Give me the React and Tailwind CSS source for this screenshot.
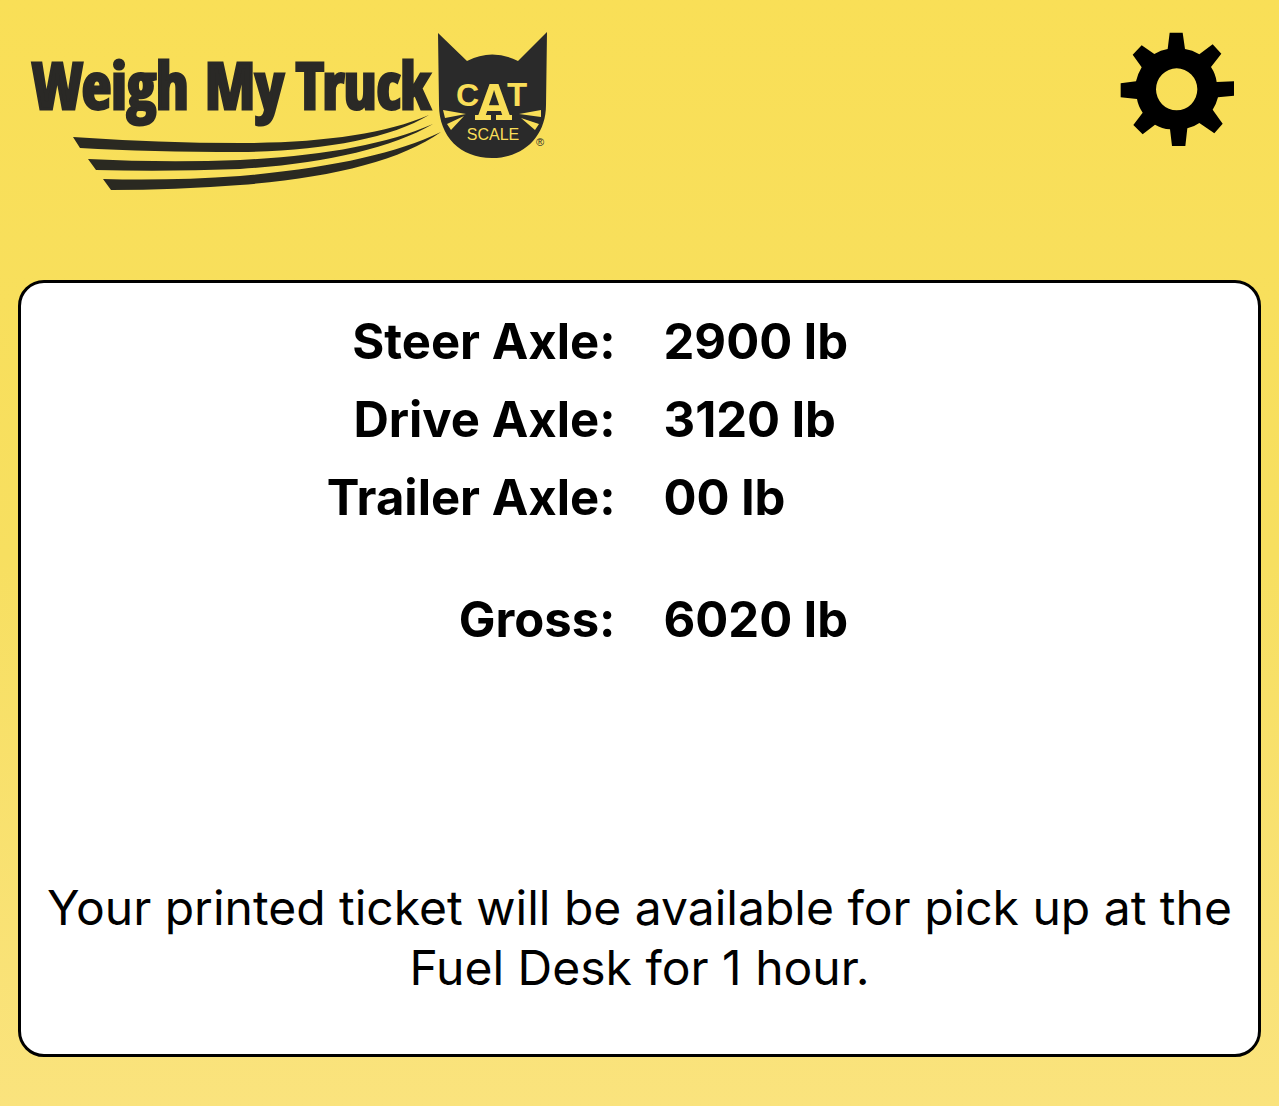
import React from 'react';

const axles = [
  { label: 'Steer Axle:', value: '2900 lb' },
  { label: 'Drive Axle:', value: '3120 lb' },
  { label: 'Trailer Axle:', value: '00 lb' },
];

function Logo() {
  return (
    <svg viewBox="30 32 520 160" className="w-[520px] h-[160px] shrink-0" role="img" aria-label="Weigh My Truck CAT Scale">
      <text y="109" fontSize="64" fontWeight="700" fill="#2a2926" stroke="#2a2926" strokeWidth="3" className="font-['Noto_Sans_ExtraCondensed','Open_Sans_Condensed','Roboto_Condensed',sans-serif]">
        <tspan x="32">Weigh</tspan> <tspan x="205">My</tspan> <tspan x="296">Truck</tspan>
      </text>

      {/* Road swooshes */}
      <g fill="#2a2921">
        <path d="M73 137 Q160 143 240 143 C320 143 385 134 429 115 C390 139 320 151 240 152 Q150 152 80 148 Z" />
        <path d="M88 159 Q165 163 240 160 C320 156 385 145 433 124 C390 149 320 164 240 169 Q165 172 96 170 Z" />
        <path d="M103 179 Q170 181 240 176 C330 168 395 154 441 132 C400 161 330 178 240 185 Q175 190 111 190 Z" />
      </g>

      {/* Cat head */}
      <path d="M438 33 L467 61 Q492 48 518 61 L547 32 L546 105 C546 136 524 158 492 158 C460 158 439 136 439 105 Z" fill="#2a2a2a" />
      <g fill="#f9de58">
        <path d="M443 110 L466 114 L445 118 Z M447 124 L464 116 L451 130 Z" />
        <path d="M519 114 L541 110 V117 Z M521 118 L539 124 L535 130 Z" />
        <g fontWeight="700" className="font-['Liberation_Sans',sans-serif]">
          <text x="456" y="106" fontSize="32">C</text>
          <text x="507" y="106" fontSize="33">T</text>
          <text x="494" y="120" fontSize="52" textAnchor="middle" stroke="#2a2a2a" strokeWidth="2" paintOrder="stroke">A</text>
        </g>
        {/* Slab feet of the A */}
        <path d="M475 115 H491 V120 H475 Z M496 115 H512 V120 H496 Z" />
        <text x="493" y="140" fontSize="16" textAnchor="middle" className="font-['Liberation_Sans',sans-serif]">SCALE</text>
      </g>
      <text x="540" y="146" fontSize="11" textAnchor="middle" fill="#2a2a2a" className="font-['Liberation_Sans',sans-serif]">®</text>
    </svg>
  );
}

function GearIcon() {
  return (
    <svg viewBox="60 34 345 345" className="w-[115px] h-[115px]" aria-hidden="true">
      <path
        fillRule="evenodd"
        d="M209 36 H248 L255 85 Q277 88 298 101 L338 71 L364 99 L333 139 Q347 160 350 184 L402 182 V225 L354 230 Q349 250 338 267 L368 309 L343 338 L298 307 Q281 319 262 323 L256 376 H216 L210 326 Q186 324 165 312 L128 341 L100 313 L128 276 Q114 255 111 235 L62 230 V188 L108 182 Q113 160 125 140 L98 102 L125 74 L163 100 Q182 88 203 85 Z M230 143 A62 63 0 1 0 230 269 A62 63 0 1 0 230 143 Z"
      />
    </svg>
  );
}

function App() {
  return (
    <div className="min-h-screen flex flex-col bg-linear-to-b from-[#f9df57] via-[#f7df60] to-[#fae37d] text-black font-['Inter','Liberation_Sans',sans-serif]">
      <header className="flex items-start justify-between pl-[30px] pr-11 pt-8 pb-[88px]">
        <Logo />
        <button type="button" aria-label="Settings" className="cursor-pointer">
          <GearIcon />
        </button>
      </header>

      <main className="flex-grow flex flex-col mx-[18px] mb-[49px] pt-5 pb-14 bg-white border-3 border-black rounded-[26px]">
        <table className="w-full table-fixed text-[49px] leading-[78px] font-bold">
          <tbody>
            {axles.map((axle) => (
              <tr key={axle.label}>
                <th scope="row" className="pr-6 text-right">{axle.label}</th>
                <td className="pl-6">{axle.value}</td>
              </tr>
            ))}
            <tr>
              <th scope="row" className="pt-11 pr-6 text-right">Gross:</th>
              <td className="pt-11 pl-6">6020 lb</td>
            </tr>
          </tbody>
        </table>

        <p className="mt-auto px-5 text-center text-5xl leading-[60px]">
          Your printed ticket will be available for pick up at the Fuel Desk for 1 hour.
        </p>
      </main>
    </div>
  );
}

export default App;
